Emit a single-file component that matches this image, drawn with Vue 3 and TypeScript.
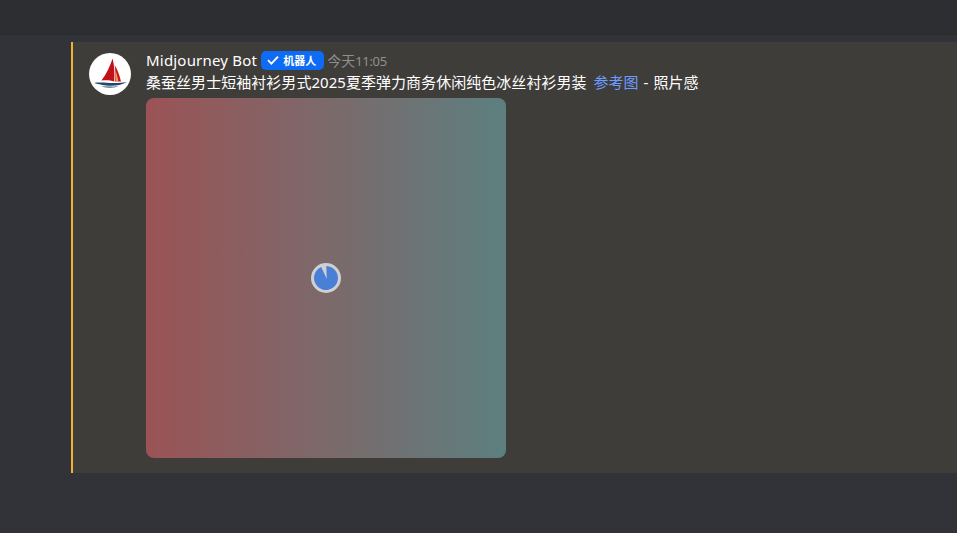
<script setup lang="ts">
const author = 'Midjourney Bot'
const day = '今天'
const clock = '11:05'
</script>

<template>
  <div class="page">
    <header class="topbar"></header>
    <main class="list">
      <article class="message">
        <div class="avatar">
          <svg viewBox="0 0 42 42" width="42" height="42">
            <circle cx="21" cy="21" r="21" fill="#fff" />
            <path d="M23.6 5.5 C21 13 17.5 21 12.4 27.6 C17 27 21.5 27.4 25.2 28.4 C25.8 21 25.4 13 23.6 5.5 Z" fill="#c21018" />
            <path d="M25.6 12 C26.5 17.5 26.7 23 26.1 28.4 L32 28.4 C30.5 22 28.4 16.5 25.6 12 Z" fill="#c9161e" />
            <path d="M26.5 18 C27.2 22 27.3 25 27 28.4 L29.2 28.4 C28.9 25 27.9 21.5 26.5 18 Z" fill="#efb23e" />
            <path d="M5 30 C13 28.5 24 31.5 38 29 C31 33 23 33.2 17 32.4 C12 31.8 8.5 31 5 30 Z" fill="#1f4a6b" />
            <path d="M12 33.6 C18 32.8 24 34 30 33 C25 35.4 18 35.4 12 33.6 Z" fill="#6d8799" />
          </svg>
        </div>
        <div class="body">
          <div class="meta">
            <span class="author">{{ author }}</span>
            <span class="badge">
              <svg viewBox="0 0 12 12" width="12" height="12">
                <path d="M1 6.2 L4.4 9.6 L11 2.6" fill="none" stroke="#fff" stroke-width="1.9" />
              </svg>
              机器人
            </span>
            <span class="time"><span class="day">{{ day }}</span><span class="clock">{{ clock }}</span></span>
          </div>
          <div class="text">
            桑蚕丝男士短袖衬衫男式2025夏季弹力商务休闲纯色冰丝衬衫男装 <a class="link">参考图</a><span class="tail"> - 照片感</span>
          </div>
          <div class="preview">
            <svg class="spinner" viewBox="0 0 30 30" width="30" height="30">
              <circle cx="15" cy="15" r="15" fill="#cfd0d3" />
              <path d="M15.8 16 L15.3 3 A12 12 0 1 1 10.2 4 Z" fill="#4a7fd6" />
            </svg>
          </div>
        </div>
      </article>
    </main>
  </div>
</template>

<style>
html, body {
  margin: 0;
  background: #313338;
}
</style>

<style scoped>
.page {
  width: 957px;
  height: 533px;
  overflow: hidden;
  background: #313338;
  display: flex;
  flex-direction: column;
  font-family: "Noto Sans", "Noto Sans CJK SC", sans-serif;
}
.topbar {
  height: 35px;
  flex: none;
  background: #2d2e32;
  border-bottom: 1px solid #2a2b2e;
  box-sizing: border-box;
}
.list {
  padding: 7px 0 0 71px;
}
.message {
  height: 431px;
  box-sizing: border-box;
  border-left: 2px solid #f0b232;
  background: #3f3d39;
  padding: 11px 0 0 16px;
  display: flex;
  gap: 15px;
}
.avatar {
  width: 42px;
  height: 42px;
  flex: none;
}
.avatar svg {
  display: block;
}
.body {
  display: flex;
  flex-direction: column;
  align-items: flex-start;
}
.meta {
  height: 16px;
  display: flex;
  align-items: center;
  gap: 4px;
  margin-top: -1px;
}
.author {
  font-size: 15px;
  letter-spacing: 0.2px;
  color: #fff;
  line-height: 16px;
}
.badge {
  height: 19px;
  box-sizing: border-box;
  padding: 0 8px 0 6px;
  border-radius: 5px;
  background: #0d6bf5;
  color: #fff;
  font-size: 11px;
  font-weight: 700;
  display: flex;
  align-items: center;
  gap: 4px;
}
.time {
  font-size: 13px;
  color: #8f9094;
  margin-left: -1px;
}
.day {
  font-size: 14px;
}
.clock {
  letter-spacing: -0.3px;
}
.text {
  margin-top: 2px;
  height: 24px;
  line-height: 24px;
  font-size: 15px;
  letter-spacing: 0.04px;
  color: #fff;
  white-space: nowrap;
}
.link {
  color: #6d9bff;
  margin-left: 3px;
}
.tail {
  word-spacing: 1px;
}
.preview {
  margin-top: 4px;
  width: 360px;
  height: 360px;
  border-radius: 8px;
  background: linear-gradient(90deg, #9b5355, #5d7f80);
  display: flex;
  align-items: center;
  justify-content: center;
}
</style>
